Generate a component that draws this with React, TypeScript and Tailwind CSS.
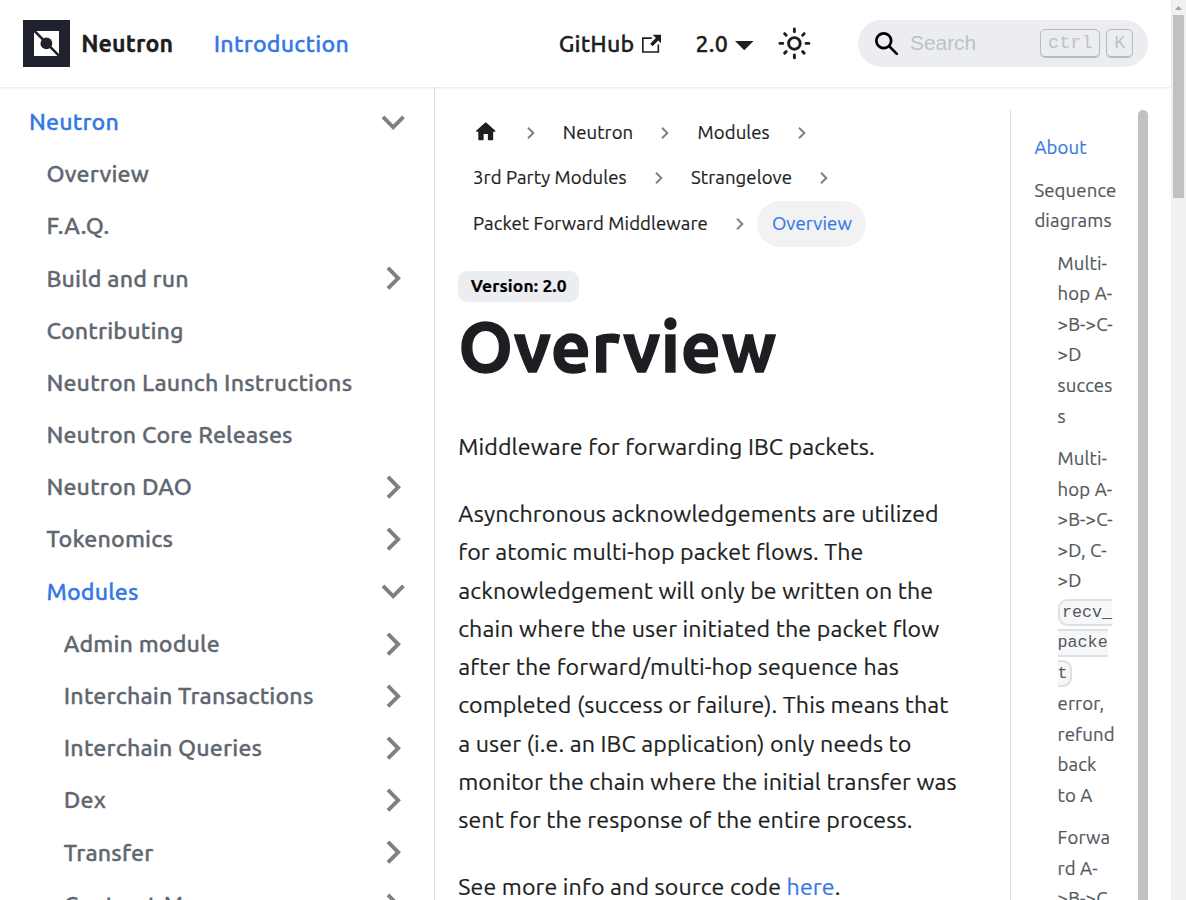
import React from "react";

type MenuItem = { label: string; depth: 0 | 1 | 2; state?: "open" | "closed"; active?: boolean };

const menu: MenuItem[] = [
  { label: "Neutron", depth: 0, state: "open", active: true },
  { label: "Overview", depth: 1 },
  { label: "F.A.Q.", depth: 1 },
  { label: "Build and run", depth: 1, state: "closed" },
  { label: "Contributing", depth: 1 },
  { label: "Neutron Launch Instructions", depth: 1 },
  { label: "Neutron Core Releases", depth: 1 },
  { label: "Neutron DAO", depth: 1, state: "closed" },
  { label: "Tokenomics", depth: 1, state: "closed" },
  { label: "Modules", depth: 1, state: "open", active: true },
  { label: "Admin module", depth: 2, state: "closed" },
  { label: "Interchain Transactions", depth: 2, state: "closed" },
  { label: "Interchain Queries", depth: 2, state: "closed" },
  { label: "Dex", depth: 2, state: "closed" },
  { label: "Transfer", depth: 2, state: "closed" },
  { label: "Contract Manager", depth: 2, state: "closed" },
];

const indent = ["pl-[29px]", "pl-[46.4px]", "pl-[63.8px]"];

function Logo() {
  return (
    <svg viewBox="0 0 47 47" className="size-[47px] shrink-0">
      <rect width="47" height="47" fill="#20212e" />
      <rect x="11" y="11" width="25" height="25" fill="#fff" />
      <path d="M10.9 10.3L36.6 36.3" stroke="#20212e" strokeWidth="2.6" />
      <circle cx="23.4" cy="23.4" r="5.9" fill="#20212e" />
    </svg>
  );
}

function Navbar() {
  return (
    <header className="z-10 flex h-[87px] shrink-0 items-center bg-white px-[23.2px] font-medium shadow-[0_1px_2px_rgba(0,0,0,0.1)] [-webkit-text-stroke:0.3px]">
      <Logo />
      <span className="ml-[11px] pb-[1px] font-bold">Neutron</span>
      <a className="ml-[40.6px] pb-[1px] tracking-[0.009em] text-[#3578e5]">Introduction</a>
      <div className="ml-auto flex items-center">
        <a className="flex items-center">
          <span className="pb-[1px]">GitHub</span>
          <svg viewBox="0 0 24 24" className="ml-[7.6px] size-[19.6px]" fill="currentColor">
            <path d="M21 13v10h-21v-19h12v2h-10v15h17v-8h2zm3-12h-10.988l4.035 4-6.977 7.07 2.828 2.828 6.977-7.07 4.125 4.172v-11z" />
          </svg>
        </a>
        <a className="ml-[34.2px] flex items-center">
          <span className="pb-[1px]">2.0</span>
          <svg viewBox="0 0 18.6 9.3" className="mt-[4px] ml-[7px] h-[9.3px] w-[18.6px]" fill="currentColor">
            <path d="M0 0H18.6L9.3 9.3z" />
          </svg>
        </a>
        <span className="ml-[17.4px] flex size-[46.4px] items-center justify-center">
          <svg viewBox="0 0 24 24" className="size-[34.8px]" fill="none" stroke="currentColor" strokeWidth="2" strokeLinecap="round">
            <circle cx="12" cy="12" r="4" />
            <path d="M2 12h2M20 12h2M12 2v2M12 20v2M5.28 5.28l1.06 1.06M17.66 17.66l1.06 1.06M18.72 5.28l-1.06 1.06M6.34 17.66l-1.06 1.06" />
          </svg>
        </span>
        <div className="ml-[40.6px] flex h-[46.4px] w-[290px] items-center rounded-full bg-[#ebedf0] pr-[14.5px] pl-[17.4px] font-normal tracking-normal text-[#bdc2c7] [-webkit-text-stroke:0]">
          <svg viewBox="0 0 16 16" className="size-[23.2px]" fill="#000">
            <path d="M6.02945,10.20327a4.17382,4.17382,0,1,1,4.17382-4.17382A4.15609,4.15609,0,0,1,6.02945,10.20327Zm9.69195,4.2199L10.8989,9.59979A5.88021,5.88021,0,0,0,12.058,6.02856,6.00467,6.00467,0,1,0,9.59979,10.8989l4.82338,4.82338a.89729.89729,0,0,0,1.29912,0,.89749.89749,0,0,0-.00087-1.29909Z" />
          </svg>
          <span className="ml-[11.6px] font-['Liberation_Sans',sans-serif] text-[20.88px]">Search</span>
          <div className="ml-auto flex gap-[6px] font-['Liberation_Mono',monospace] text-[18.56px] leading-[28px]">
            <kbd className="h-[28px] w-[60px] rounded-[5px] border border-[#b4bcc2] text-center font-[inherit] shadow-[0_1px_0_#b4bcc2]">ctrl</kbd>
            <kbd className="h-[28px] w-[27px] rounded-[5px] border border-[#b4bcc2] text-center font-[inherit] shadow-[0_1px_0_#b4bcc2]">K</kbd>
          </div>
        </div>
      </div>
    </header>
  );
}

function Sidebar() {
  return (
    <aside className="w-[435px] shrink-0 overflow-hidden border-r border-[#dadde1] pt-[11.8px]">
      <ul className="flex flex-col gap-[5.8px]">
        {menu.map((m) => (
          <li
            key={m.label}
            className={`flex h-[46.4px] shrink-0 items-center justify-between pr-[17.2px] leading-[29px] font-medium tracking-[0.0065em] [-webkit-text-stroke:0.3px] ${indent[m.depth]} ${m.active ? "text-[#3578e5]" : "text-[#606770]"}`}
          >
            <span className="pb-[1px]">{m.label}</span>
            {m.state && (
              <svg viewBox="0 0 24 24" className={`size-[46.4px] ${m.state === "open" ? "rotate-180" : "rotate-90"}`} fill="#808080">
                <path d="M7.41 15.41L12 10.83l4.59 4.58L18 14l-6-6-6 6z" />
              </svg>
            )}
          </li>
        ))}
      </ul>
    </aside>
  );
}

function Crumb({ children }: { children: React.ReactNode }) {
  return (
    <li className="flex items-center">
      <a className="flex h-[45.5px] items-center px-[14.85px]">{children}</a>
      <svg viewBox="0 0 256 256" className="mx-[11.3px] size-[12px]" fill="#808080">
        <path d="M79.093 0L48.907 30.187L146.72 128L48.907 225.813L79.093 256L207.093 128z" />
      </svg>
    </li>
  );
}

function Breadcrumbs() {
  return (
    <ul className="flex flex-wrap text-[18.56px] leading-[30.6px] tracking-[0.005em]">
      <Crumb>
        <svg viewBox="0 0 24 24" className="-mt-[2px] size-[25.5px]" fill="currentColor">
          <path d="M10 19v-5h4v5c0 .55.45 1 1 1h3c.55 0 1-.45 1-1v-7h1.7c.46 0 .68-.57.33-.87L12.67 3.6c-.38-.34-.96-.34-1.34 0l-8.36 7.53c-.34.3-.13.87.33.87H5v7c0 .55.45 1 1 1h3c.55 0 1-.45 1-1z" />
        </svg>
      </Crumb>
      <Crumb>Neutron</Crumb>
      <Crumb>Modules</Crumb>
      <Crumb>3rd Party Modules</Crumb>
      <Crumb>Strangelove</Crumb>
      <Crumb>Packet Forward Middleware</Crumb>
      <li className="flex h-[45.5px] items-center rounded-full bg-[#f2f2f2] px-[14.6px] text-[#3578e5]">Overview</li>
    </ul>
  );
}

function Toc() {
  return (
    <nav className="mt-[23.2px] flex w-[138px] shrink-0 justify-between overflow-hidden border-l border-[#dadde1]">
      <ul className="w-[107px] pt-[23.3px] pl-[23.4px] text-[18.56px] leading-[30.62px] text-[#525860]">
        <li className="text-[#3578e5]">About</li>
        <li className="mt-[11.6px]">Sequence diagrams</li>
        <li>
          <ul className="w-[82px] pl-[23.2px] wrap-break-word">
            <li className="mt-[11.6px]">Multi-hop A-&gt;B-&gt;C-&gt;D success</li>
            <li className="mt-[11.6px]">
              Multi-hop A-&gt;B-&gt;C-&gt;D, C-&gt;D{" "}
              <code className="rounded-[9.3px] border-2 border-[#dfe0e1] bg-[#f6f7f8] px-[2.3px] py-[2.3px] align-middle font-['Liberation_Mono',monospace] text-[16.7px] leading-none font-normal tracking-normal [-webkit-text-stroke:0]">
                recv_packet
              </code>{" "}
              error, refund back to A
            </li>
            <li className="mt-[11.6px]">Forward A-&gt;B-&gt;C with 1 retry</li>
          </ul>
        </li>
      </ul>
      <div className="w-[10px] rounded-t-full bg-[#c1c1c1]" />
    </nav>
  );
}

function PageScrollbar() {
  return (
    <div className="flex w-[15px] shrink-0 flex-col items-center bg-[#f1f1f1]">
      <svg viewBox="0 0 15 15" className="size-[15px]" fill="#a3a3a3">
        <path d="M4 10L7.5 6L11 10z" />
      </svg>
      <div className="h-[183px] w-[11px] bg-[#c1c1c1]" />
    </div>
  );
}

export default function App() {
  return (
    <div className="flex h-screen w-full overflow-hidden bg-white font-['Ubuntu','Noto_Sans',sans-serif] text-[23.2px] leading-[38.28px] tracking-[0.0055em] text-[#1c1e21] [-webkit-text-stroke:0.2px]">
      <div className="flex min-w-0 flex-1 flex-col">
        <Navbar />
        <div className="flex min-h-0 flex-1">
          <Sidebar />
          <main className="flex min-w-0 flex-1 overflow-hidden pr-[23px] pl-[23.2px]">
            <article className="w-[505px] shrink-0 pt-[23.2px]">
              <Breadcrumbs />
              <span className="mt-[24.5px] flex h-[31px] w-[121px] items-center justify-center rounded-[9px] bg-[#ebedf0] pb-[1px] text-[17.4px] leading-none font-bold text-black">
                Version: 2.0
              </span>
              <h1 className="pt-[1px] text-[69.6px] leading-[87px] font-bold tracking-[0.01em] [-webkit-text-stroke:1.3px]">
                Overview
              </h1>
              <p className="mt-[36.5px]">Middleware for forwarding IBC packets.</p>
              <p className="mt-[29px]">
                Asynchronous acknowledgements are utilized for atomic multi-hop packet flows. The acknowledgement will
                only be written on the chain where the user initiated the packet flow after the forward/multi-hop
                sequence has completed (success or failure). This means that a user (i.e. an IBC application) only needs
                to monitor the chain where the initial transfer was sent for the response of the entire process.
              </p>
              <p className="mt-[28.4px]">
                See more info and source code <a className="text-[#3578e5]">here</a>.
              </p>
            </article>
            <div className="flex-1" />
            <Toc />
          </main>
        </div>
      </div>
      <PageScrollbar />
    </div>
  );
}
